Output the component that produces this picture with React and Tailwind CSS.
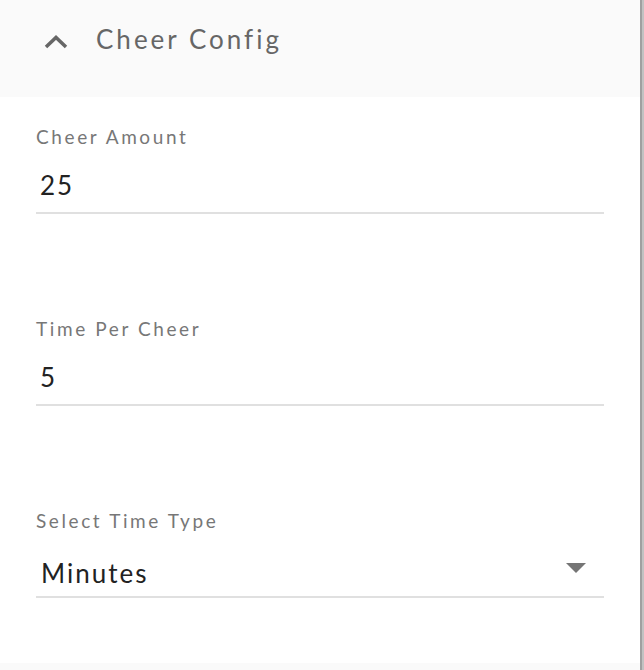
import { useState } from "react";

const fields = [
  { label: "Cheer Amount", value: "25" },
  { label: "Time Per Cheer", value: "5" },
];

function ChevronUp() {
  return (
    <svg width="24" height="14" viewBox="0 0 24 14" className="shrink-0">
      <polyline points="2,12 12,2.5 22,12" fill="none" stroke="#666" strokeWidth="3.5" />
    </svg>
  );
}

function Field({ label, value }) {
  return (
    <div className="flex flex-col">
      <p className="text-[19px] leading-[20px] tracking-[2.6px] text-[#777]">{label}</p>
      <div className="mt-[23px] pl-[4px] text-[26px] leading-[30px] tracking-[2px] text-[#222]">{value}</div>
      <div className="mt-[12px] h-[2px] bg-[#e0e0e0]" />
    </div>
  );
}

export default function App() {
  const [unit] = useState("Minutes");

  return (
    <div className="flex h-[670px] w-[644px] bg-white font-['Lato',sans-serif]">
      <div className="flex flex-1 flex-col">
        {/* Header */}
        <div className="flex h-[97px] items-center gap-[28px] bg-[#fafafa] pl-[44px] pb-[14px]">
          <ChevronUp />
          <h2 className="-mt-[5px] text-[26px] tracking-[3px] text-[#666]">Cheer Config</h2>
        </div>

        {/* Fields */}
        <div className="flex flex-col gap-[105px] px-[36px] pt-[30px]">
          {fields.map((f) => (
            <Field key={f.label} label={f.label} value={f.value} />
          ))}
          <div className="flex flex-col">
            <p className="text-[19px] leading-[20px] tracking-[2.6px] text-[#777]">Select Time Type</p>
            <div className="mt-[27px] flex items-center justify-between pl-[5px] pr-[18px]">
              <span className="text-[26px] leading-[30px] tracking-[2px] text-[#222]">{unit}</span>
              <svg width="20" height="10" viewBox="0 0 20 10" className="-mt-[10px]">
                <polygon points="0,0 20,0 10,10" fill="#757575" />
              </svg>
            </div>
            <div className="mt-[8px] h-[2px] bg-[#e0e0e0]" />
          </div>
        </div>
        <div className="flex-1" />
        <div className="h-[7px] bg-[#fafafa]" />
      </div>
      <div className="flex w-[4px]">
        <div className="w-[2px] bg-[#a0a0a0]" />
        <div className="w-[2px] bg-[#c2c2c2]" />
      </div>
    </div>
  );
}
